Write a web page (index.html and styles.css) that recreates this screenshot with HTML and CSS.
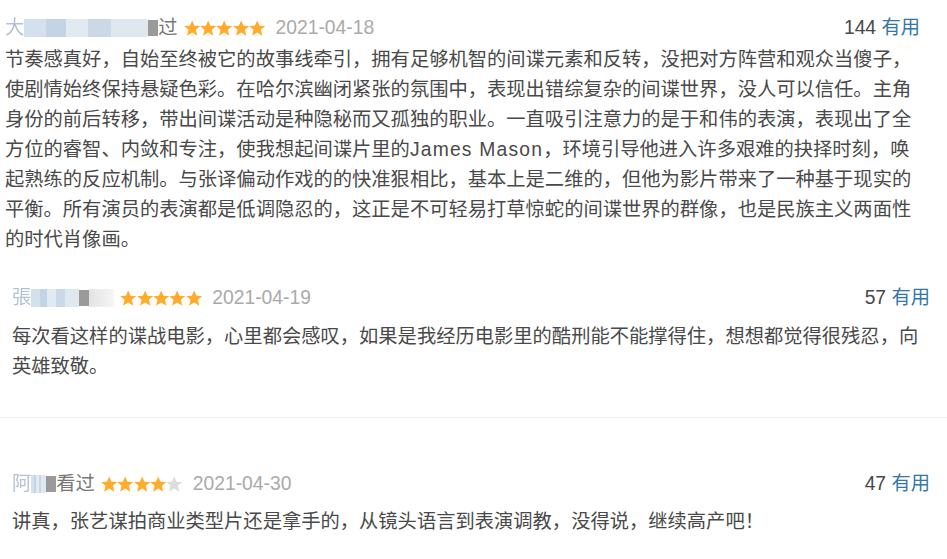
FILE: index.html
```html
<!DOCTYPE html>
<html lang="zh">
<head>
  <meta charset="UTF-8">
  <title>短评</title>
  <link rel="stylesheet" href="styles.css">
</head>
<body>
  <div class="review review--first">
    <div class="review-head">
      <span class="author">
        <span class="initial">大</span><span class="mosaic mosaic--long"></span><span class="mosaic-dark"></span><span class="watched">过</span>
      </span>
      <span class="stars">
        <svg viewBox="0 0 20 20"><polygon class="on" points="10,0.5 12.9,6.9 19.8,7.3 14.5,11.9 16.2,19.2 10,15.3 3.8,19.2 5.5,11.9 0.2,7.3 7.1,6.9"/></svg>
        <svg viewBox="0 0 20 20"><polygon class="on" points="10,0.5 12.9,6.9 19.8,7.3 14.5,11.9 16.2,19.2 10,15.3 3.8,19.2 5.5,11.9 0.2,7.3 7.1,6.9"/></svg>
        <svg viewBox="0 0 20 20"><polygon class="on" points="10,0.5 12.9,6.9 19.8,7.3 14.5,11.9 16.2,19.2 10,15.3 3.8,19.2 5.5,11.9 0.2,7.3 7.1,6.9"/></svg>
        <svg viewBox="0 0 20 20"><polygon class="on" points="10,0.5 12.9,6.9 19.8,7.3 14.5,11.9 16.2,19.2 10,15.3 3.8,19.2 5.5,11.9 0.2,7.3 7.1,6.9"/></svg>
        <svg viewBox="0 0 20 20"><polygon class="on" points="10,0.5 12.9,6.9 19.8,7.3 14.5,11.9 16.2,19.2 10,15.3 3.8,19.2 5.5,11.9 0.2,7.3 7.1,6.9"/></svg>
      </span>
      <span class="date">2021-04-18</span>
      <span class="votes"><span class="count">144</span> <a class="useful">有用</a></span>
    </div>
    <p class="review-body">节奏感真好，自始至终被它的故事线牵引，拥有足够机智的间谍元素和反转，没把对方阵营和观众当傻子，使剧情始终保持悬疑色彩。在哈尔滨幽闭紧张的氛围中，表现出错综复杂的间谍世界，没人可以信任。主角身份的前后转移，带出间谍活动是种隐秘而又孤独的职业。一直吸引注意力的是于和伟的表演，表现出了全方位的睿智、内敛和专注，使我想起间谍片里的<span class="latin">James Mason</span>，环境引导他进入许多艰难的抉择时刻，唤起熟练的反应机制。与张译偏动作戏的的快准狠相比，基本上是二维的，但他为影片带来了一种基于现实的平衡。所有演员的表演都是低调隐忍的，这正是不可轻易打草惊蛇的间谍世界的群像，也是民族主义两面性的时代肖像画。</p>
  </div>

  <div class="review review--second">
    <div class="review-head">
      <span class="author">
        <span class="initial">張</span><span class="mosaic mosaic--mid"></span><span class="mosaic-dark"></span><span class="mosaic mosaic--fade"></span>
      </span>
      <span class="stars">
        <svg viewBox="0 0 20 20"><polygon class="on" points="10,0.5 12.9,6.9 19.8,7.3 14.5,11.9 16.2,19.2 10,15.3 3.8,19.2 5.5,11.9 0.2,7.3 7.1,6.9"/></svg>
        <svg viewBox="0 0 20 20"><polygon class="on" points="10,0.5 12.9,6.9 19.8,7.3 14.5,11.9 16.2,19.2 10,15.3 3.8,19.2 5.5,11.9 0.2,7.3 7.1,6.9"/></svg>
        <svg viewBox="0 0 20 20"><polygon class="on" points="10,0.5 12.9,6.9 19.8,7.3 14.5,11.9 16.2,19.2 10,15.3 3.8,19.2 5.5,11.9 0.2,7.3 7.1,6.9"/></svg>
        <svg viewBox="0 0 20 20"><polygon class="on" points="10,0.5 12.9,6.9 19.8,7.3 14.5,11.9 16.2,19.2 10,15.3 3.8,19.2 5.5,11.9 0.2,7.3 7.1,6.9"/></svg>
        <svg viewBox="0 0 20 20"><polygon class="on" points="10,0.5 12.9,6.9 19.8,7.3 14.5,11.9 16.2,19.2 10,15.3 3.8,19.2 5.5,11.9 0.2,7.3 7.1,6.9"/></svg>
      </span>
      <span class="date">2021-04-19</span>
      <span class="votes"><span class="count">57</span> <a class="useful">有用</a></span>
    </div>
    <p class="review-body">每次看这样的谍战电影，心里都会感叹，如果是我经历电影里的酷刑能不能撑得住，想想都觉得很残忍，向英雄致敬。</p>
  </div>

  <div class="review review--third">
    <div class="review-head">
      <span class="author">
        <span class="initial">阿</span><span class="mosaic mosaic--short"></span><span class="mosaic-dark"></span><span class="watched">看过</span>
      </span>
      <span class="stars">
        <svg viewBox="0 0 20 20"><polygon class="on" points="10,0.5 12.9,6.9 19.8,7.3 14.5,11.9 16.2,19.2 10,15.3 3.8,19.2 5.5,11.9 0.2,7.3 7.1,6.9"/></svg>
        <svg viewBox="0 0 20 20"><polygon class="on" points="10,0.5 12.9,6.9 19.8,7.3 14.5,11.9 16.2,19.2 10,15.3 3.8,19.2 5.5,11.9 0.2,7.3 7.1,6.9"/></svg>
        <svg viewBox="0 0 20 20"><polygon class="on" points="10,0.5 12.9,6.9 19.8,7.3 14.5,11.9 16.2,19.2 10,15.3 3.8,19.2 5.5,11.9 0.2,7.3 7.1,6.9"/></svg>
        <svg viewBox="0 0 20 20"><polygon class="on" points="10,0.5 12.9,6.9 19.8,7.3 14.5,11.9 16.2,19.2 10,15.3 3.8,19.2 5.5,11.9 0.2,7.3 7.1,6.9"/></svg>
        <svg viewBox="0 0 20 20"><polygon class="off" points="10,0.5 12.9,6.9 19.8,7.3 14.5,11.9 16.2,19.2 10,15.3 3.8,19.2 5.5,11.9 0.2,7.3 7.1,6.9"/></svg>
      </span>
      <span class="date">2021-04-30</span>
      <span class="votes"><span class="count">47</span> <a class="useful">有用</a></span>
    </div>
    <p class="review-body">讲真，张艺谋拍商业类型片还是拿手的，从镜头语言到表演调教，没得说，继续高产吧！</p>
  </div>
</body>
</html>
```

FILE: styles.css
```css
body {
  margin: 0;
  background: #fff;
  font-family: "Liberation Sans", "Noto Sans CJK SC", sans-serif;
  font-size: 19.3px;
  color: #494949;
}
.review {
  padding: 0 17px 0 12px;
}
.review--first {
  padding: 13px 27px 0 5px;
}
.review--second {
  padding-top: 28px;
  padding-bottom: 35px;
  border-bottom: 1px solid #ececec;
}
.review--third {
  padding-top: 51px;
}
.review-head {
  display: flex;
  align-items: center;
  height: 30px;
  line-height: 30px;
}
.author {
  display: flex;
  align-items: center;
  color: #9fb3c9;
}
.initial {
  filter: blur(0.6px);
  opacity: 0.8;
}
.mosaic {
  display: inline-block;
  height: 18px;
  background: linear-gradient(90deg, #d4e0ec 0 18%, #c3d4e5 18% 34%, #e1e9f1 34% 52%, #cbd9e7 52% 70%, #dfe7ef 70% 100%);
}
.mosaic--long { width: 124px; }
.mosaic--mid { width: 48px; }
.mosaic--short { width: 15px; }
.mosaic--fade {
  width: 25px;
  background: linear-gradient(90deg, #e3e3e3, #f6f6f6);
}
.mosaic-dark {
  display: inline-block;
  width: 10px;
  height: 16px;
  background: #9a9a9a;
}
.watched {
  color: #777;
}
.stars {
  display: flex;
  margin-left: 6px;
}
.stars svg {
  width: 16.4px;
  height: 16.4px;
}
.stars .on { fill: #ffac2d; }
.stars .off { fill: #ddd; }
.date {
  margin-left: 10px;
  color: #aaa;
}
.votes {
  margin-left: auto;
}
.useful {
  color: #3377aa;
  cursor: pointer;
}
.review-body {
  margin: 9px 0 0;
  line-height: 30px;
}
.review--first .review-body {
  margin-top: 2px;
}
.review--third .review-body {
  margin-top: 8px;
}
.latin {
  letter-spacing: 1.2px;
}
```
